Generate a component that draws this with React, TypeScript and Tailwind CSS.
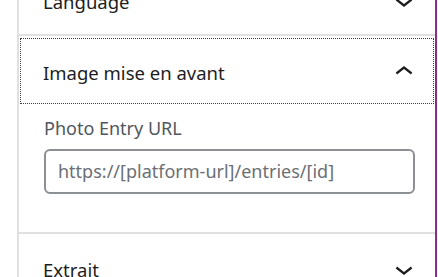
import React from "react";

function ChevronUp() {
  return (
    <svg viewBox="0 0 24 24" className="w-[36px] h-[36px] fill-[#1e1e1e]">
      <path d="M6.5 12.4L12 8l5.5 4.4-.9 1.2L12 10l-4.6 3.6-.9-1.2z" />
    </svg>
  );
}

function ChevronDown() {
  return (
    <svg viewBox="0 0 24 24" className="w-[36px] h-[36px] fill-[#1e1e1e]">
      <path d="M17.5 11.6L12 16l-5.5-4.4.9-1.2L12 14l4.6-3.6.9 1.2z" />
    </svg>
  );
}

function PanelHeader({ title, open, focused }: { title: string; open?: boolean; focused?: boolean }) {
  return (
    <div
      className={
        "h-[68px] flex items-center justify-between pl-[24px] pr-[13px] " +
        (focused ? "outline-1 outline-dotted outline-[#3c3c3c] -outline-offset-[2px]" : "")
      }
    >
      <span className="text-[18.5px] text-[#1e1e1e] pt-[3px]">{title}</span>
      <span className="pt-[2px]">{open ? <ChevronUp /> : <ChevronDown />}</span>
    </div>
  );
}

export default function App() {
  return (
    <div
      className="w-[438px] h-[277px] overflow-hidden bg-white flex"
      style={{ fontFamily: '"Noto Sans", "Open Sans", sans-serif' }}
    >
      <div className="w-[17px] shrink-0" />
      <div className="flex-1 border-l-2 border-[#e0e0e3] border-r-2 border-r-[#8d2a8e] mr-[1px]">
        <div className="-mt-[34px] border-b-2 border-[#e0e0e3]">
          <PanelHeader title="Language" />
        </div>

        <div className="border-b-2 border-[#e0e0e3]">
          <div className="pt-[1px]">
            <PanelHeader title="Image mise en avant" open focused />
          </div>
          <div className="pl-[25px] pr-[20px] pt-[10px] pb-[38px]">
            <div className="text-[18px] text-[#50575e] leading-[26px]">Photo Entry URL</div>
            <div className="mt-[8px] h-[45px] rounded-[6px] border-2 border-[#8c8f94] flex items-center px-[12px]">
              <span className="text-[18px] text-[#6b6f75]">https://[platform-url]/entries/[id]</span>
            </div>
          </div>
        </div>

        <PanelHeader title="Extrait" />
      </div>
    </div>
  );
}
